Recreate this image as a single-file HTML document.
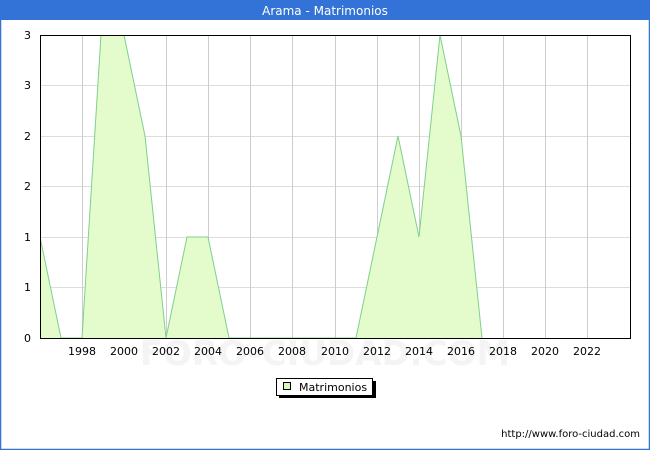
<!DOCTYPE html><html><head><style>
body{margin:0;width:650px;height:450px;overflow:hidden;font-family:"DejaVu Sans","Liberation Sans",sans-serif;}
</style></head><body>
<svg width="650" height="450" xmlns="http://www.w3.org/2000/svg" font-family="DejaVu Sans, Liberation Sans, sans-serif">
<rect x="0" y="0" width="650" height="450" fill="#fff"/>
<rect x="0.5" y="0.5" width="649" height="449" fill="none" stroke="#3372d6" stroke-width="1.5"/>
<rect x="0" y="0" width="650" height="20" fill="#3372d6"/>
<text x="325" y="15" fill="#fff" font-size="12" text-anchor="middle">Arama - Matrimonios</text>
<g stroke="#ddd" stroke-width="1">
<line x1="40" y1="85.5" x2="630" y2="85.5"/><line x1="40" y1="136.5" x2="630" y2="136.5"/><line x1="40" y1="186.5" x2="630" y2="186.5"/><line x1="40" y1="237.5" x2="630" y2="237.5"/><line x1="40" y1="287.5" x2="630" y2="287.5"/>
</g>
<g stroke="#ccc" stroke-width="1">
<line x1="82.5" y1="35" x2="82.5" y2="338"/><line x1="124.5" y1="35" x2="124.5" y2="338"/><line x1="166.5" y1="35" x2="166.5" y2="338"/><line x1="208.5" y1="35" x2="208.5" y2="338"/><line x1="250.5" y1="35" x2="250.5" y2="338"/><line x1="292.5" y1="35" x2="292.5" y2="338"/><line x1="335.5" y1="35" x2="335.5" y2="338"/><line x1="377.5" y1="35" x2="377.5" y2="338"/><line x1="419.5" y1="35" x2="419.5" y2="338"/><line x1="461.5" y1="35" x2="461.5" y2="338"/><line x1="503.5" y1="35" x2="503.5" y2="338"/><line x1="545.5" y1="35" x2="545.5" y2="338"/><line x1="587.5" y1="35" x2="587.5" y2="338"/>
</g>
<text x="325" y="365" fill="#f4f4f4" font-size="34" text-anchor="middle" font-weight="bold">FORO-CIUDAD.COM</text>
<clipPath id="c"><rect x="40" y="35" width="590" height="303"/></clipPath>
<g clip-path="url(#c)">
<polygon fill="#e4fccc" points="40,338 40,237 61,338 82,338 103,3 124,35 145,136 166,338 187,237 208,237 229,338 356,338 377,237 398,136 419,237 440,35 461,136 482,338"/>
<polyline fill="none" stroke="#7fcf8f" stroke-width="1" points="40,237 61,338 82,338 103,3 124,35 145,136 166,338 187,237 208,237 229,338 356,338 377,237 398,136 419,237 440,35 461,136 482,338"/>
</g>
<rect x="40.5" y="35.5" width="590" height="303" fill="none" stroke="#000"/>
<g font-size="11" fill="#000" text-anchor="end">
<text x="31" y="39">3</text><text x="31" y="89">3</text><text x="31" y="140">2</text><text x="31" y="190">2</text><text x="31" y="241">1</text><text x="31" y="291">1</text><text x="31" y="342">0</text>
</g>
<g font-size="11" fill="#000" text-anchor="middle">
<text x="82" y="355">1998</text><text x="124" y="355">2000</text><text x="166" y="355">2002</text><text x="208" y="355">2004</text><text x="250" y="355">2006</text><text x="292" y="355">2008</text><text x="335" y="355">2010</text><text x="377" y="355">2012</text><text x="419" y="355">2014</text><text x="461" y="355">2016</text><text x="503" y="355">2018</text><text x="545" y="355">2020</text><text x="587" y="355">2022</text>
</g>
<rect x="279" y="381" width="97" height="17" fill="#000"/>
<rect x="276.5" y="378.5" width="96" height="17" fill="#fff" stroke="#000"/>
<rect x="283.5" y="382.5" width="7" height="7" fill="#d8f8b8" stroke="#000"/>
<text x="299" y="391" font-size="11">Matrimonios</text>
<text x="640" y="437" font-size="10" text-anchor="end">http://www.foro-ciudad.com</text>
</svg>
</body></html>
